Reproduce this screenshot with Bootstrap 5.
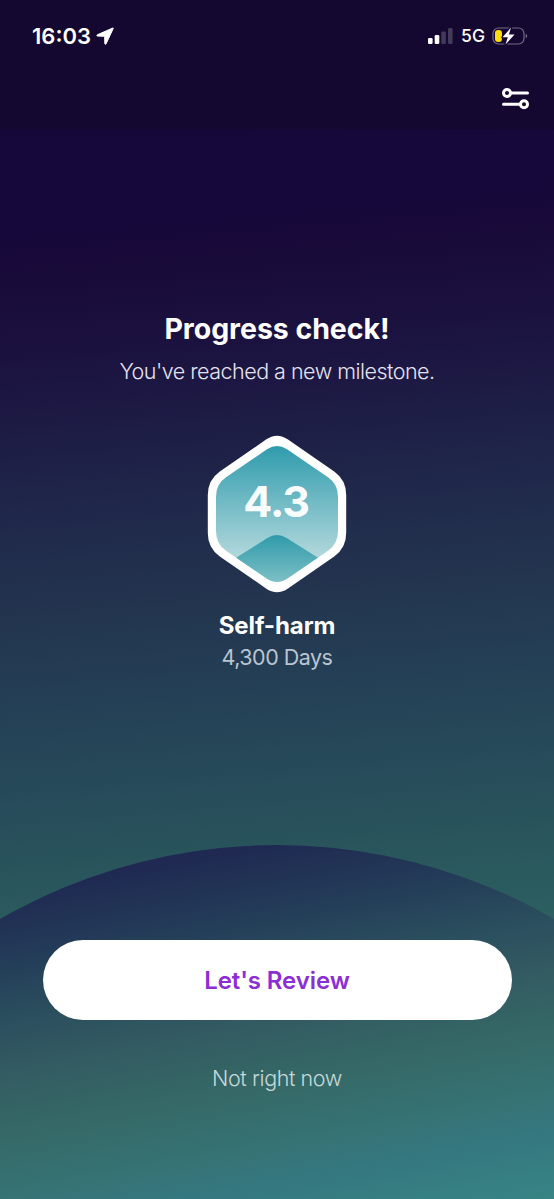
<!DOCTYPE html>
<html lang="en">
<head>
<meta charset="utf-8">
<meta name="viewport" content="width=device-width, initial-scale=1">
<title>Progress check</title>
<link rel="stylesheet" href="https://cdn.jsdelivr.net/npm/bootstrap@5.3.0/dist/css/bootstrap.min.css">
<style>
body{font-family:Inter,"Liberation Sans",sans-serif;color:#fff;background:#17083a}
.screen{width:554px;height:1199px;background:linear-gradient(175deg,#16073a 0,#17083a 20%,#190b39 23%,#1b1240 29%,#1d1c45 35%,#202a4b 43%,#23354f 50%,#244056 57%,#274c5a 65%,#29545c 70%,#2b5f60 77%,#2f6d68 100%)}
.topbar{height:129px;background:#140730}
.status{height:71px;padding:0 26px 0 32px}
.clock{font-size:22px;font-weight:600;line-height:24px}
.network{font-size:17.5px;font-weight:450;line-height:24px;margin:0 7px 0 8px}
.title{font-size:28.5px;line-height:36px;font-weight:700;letter-spacing:-.05px;margin-top:182px}
.subtitle{font-size:21.5px;line-height:28px;font-weight:300;letter-spacing:-.51px;color:#e6e3f0;margin-top:10px}
.emblem{margin-top:50px}
.name{font-size:24px;line-height:30px;font-weight:700;letter-spacing:-.1px;margin-top:18px}
.days{font-size:21.5px;line-height:28px;letter-spacing:-.5px;color:#b8c5d0;margin-top:2px}
.hill{height:354px;isolation:isolate}
.hill::before{content:"";position:absolute;z-index:-1;left:-278px;top:0;width:1110px;height:1110px;border-radius:50%;background:linear-gradient(169.5deg,#1f2852 0,#1f2952 98px,#243f59 175px,#2b4f5e 225px,#335b62 275px,#356866 332px,#367273 391px,#357880 435px,#378484 500px)}
.review{width:469px;height:80px;font-size:24px;font-weight:600;letter-spacing:-.1px;color:#8b2fd4;margin-top:95px;padding-top:8px}
.skip{font-size:21.5px;line-height:28px;font-weight:300;letter-spacing:-.4px;color:#c5d9da;margin-top:44px}
</style>
</head>
<body>
<main class="screen d-flex flex-column overflow-hidden">
  <header class="topbar">
    <div class="status d-flex align-items-center justify-content-between">
      <div class="d-flex align-items-center">
        <span class="clock">16:03</span>
        <svg class="ms-1" width="20" height="20" viewBox="0 0 20 20"><path d="M17.8 2 2.300 8.800c-.7.4-.6 1.200.3 1.300l7.100.2.1 7.200c.1 1 .9 1.100 1.300.3L18.200 2.500c.2-.4 0-.7-.4-.5Z" fill="#fff" stroke="#fff"/></svg>
      </div>
      <div class="d-flex align-items-center">
        <svg width="25" height="18" viewBox="0 0 25 18"><g fill="#fff"><rect x="0" y="11" width="4.600" height="6" rx="1.300"/><rect x="6.700" y="8" width="4.600" height="9" rx="1.300"/><g opacity=".2"><rect x="13.300" y="4.500" width="4.600" height="12.500" rx="1.300"/><rect x="20" y="1" width="4.600" height="16" rx="1.300"/></g></g></svg>
        <span class="network">5G</span>
        <svg width="36" height="20" viewBox="0 0 36 20"><rect x="1" y="2" width="31" height="16" rx="5.500" fill="none" stroke="#746b86" stroke-width="1.200"/><path d="M33.700 8c2 .6 2 3.400 0 4Z" fill="#746b86"/><rect x="3" y="4" width="7" height="12" rx="3.200" fill="#ffde0a"/><path d="M19 1.500 10.500 11.200h5.300L13.500 18.500 22.500 8.500h-5.600Z" fill="#fff" stroke="#150731" stroke-width="2.500" paint-order="stroke" stroke-linejoin="round"/></svg>
      </div>
    </div>
    <div class="d-flex justify-content-end pe-4 pt-3">
      <svg width="29" height="23" viewBox="0 0 29 23" fill="none" stroke="#fff" stroke-width="3" stroke-linecap="round"><circle cx="6" cy="6" r="3.500"/><path d="M10 6h16.500M2.500 17.300h16"/><circle cx="23" cy="17.300" r="3.500"/></svg>
    </div>
  </header>
  <section class="flex-grow-1 d-flex flex-column align-items-center">
    <h1 class="title mb-0">Progress check!</h1>
    <p class="subtitle mb-0">You've reached a new milestone.</p>
    <svg class="emblem" width="140" height="158" viewBox="0 0 140 158">
      <defs>
        <linearGradient id="face" x1="0" y1="10" x2="0" y2="124" gradientUnits="userSpaceOnUse"><stop stop-color="#2e9bac"/><stop offset="1" stop-color="#b4d9dd"/></linearGradient>
        <linearGradient id="peak" x1="0" y1="99" x2="0" y2="147" gradientUnits="userSpaceOnUse"><stop stop-color="#2e9aa9"/><stop offset="1" stop-color="#7dbfc6"/></linearGradient>
        <clipPath id="inner"><path d="M60 14.300Q70 7.500 80 14.300L121 42.200Q131 49 131 62V96Q131 109 121 115.800L80 143.700Q70 150.500 60 143.700L19 115.800Q9 109 9 96V62Q9 49 19 42.200Z"/></clipPath>
      </defs>
      <path d="M59 4.600Q70-3 81 4.600L127.200 36.500Q139.200 45 139.200 60V98Q139.200 113 127.200 121.500L81 153.400Q70 161 59 153.400L12.800 121.500Q.8 113 .8 98V60Q.8 45 12.800 36.500Z" fill="#fff"/>
      <g clip-path="url(#inner)"><path d="M0 0h140v158H0Z" fill="url(#face)"/><path d="M0 141 60 103.200Q70 97 80 103.200L140 141V158H0Z" fill="url(#peak)"/></g>
      <text x="69.200" y="82" text-anchor="middle" font-size="43" font-weight="650" letter-spacing="-1" fill="#f8fcfd">4.3</text>
    </svg>
    <h2 class="name mb-0">Self-harm</h2>
    <p class="days mb-0">4,300 Days</p>
  </section>
  <footer class="hill position-relative d-flex flex-column align-items-center">
    <button type="button" class="review btn btn-light bg-white rounded-pill border-0">Let's Review</button>
    <a class="skip text-decoration-none" href="#">Not right now</a>
  </footer>
</main>
<script src="https://cdn.jsdelivr.net/npm/bootstrap@5.3.0/dist/js/bootstrap.bundle.min.js"></script>
</body>
</html>
